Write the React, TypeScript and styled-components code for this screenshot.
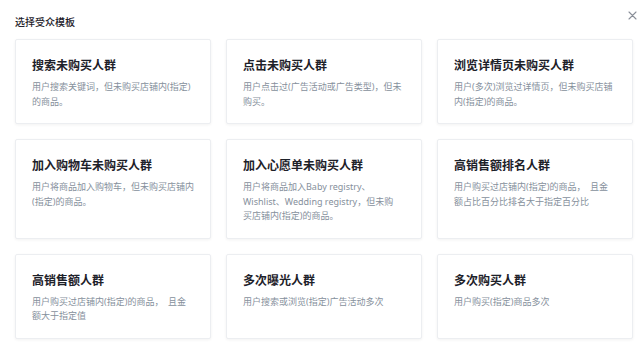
import { Fragment } from "react";
import styled, { createGlobalStyle } from "styled-components";

const GlobalStyle = createGlobalStyle`
  html, body {
    margin: 0;
    padding: 0;
    background: #ffffff;
  }
  body {
    font-family: "Noto Sans CJK SC", "Noto Sans", sans-serif;
    -webkit-font-smoothing: antialiased;
  }
`;

const Wrap = styled.div`
  width: 644px;
  height: 351px;
  box-sizing: border-box;
  padding: 15px 12px 0px 15px;
  position: relative;
  background-color: #ffffff;
  overflow: hidden;
`;
const Header = styled.div`
  display: flex;
  align-items: center;
  height: 14px;
  margin-bottom: 10px;
`;
const Title = styled.h1`
  margin: 0;
  font-size: 10px;
  line-height: 14px;
  font-weight: 500;
  color: #1d2129;
`;
const Close = styled.button`
  position: absolute;
  top: 10px;
  right: 7px;
  width: 10px;
  height: 10px;
  padding: 0;
  border: none;
  background: none;
  cursor: pointer;
  display: flex;
  align-items: center;
  justify-content: center;
  svg {
    display: block;
  }
`;
const Grid = styled.div`
  display: grid;
  grid-template-columns: repeat(3, 196px);
  column-gap: 15px;
  row-gap: 15px;
`;
const Card = styled.div`
  box-sizing: border-box;
  padding: 16px 13px 14px 16px;
  background: #ffffff;
  border: 1px solid #eceef1;
  border-radius: 2px;
  box-shadow: 0 1px 3px rgba(29, 33, 41, 0.06);
  cursor: pointer;
`;
const CardTitle = styled.div`
  font-size: 12px;
  line-height: 18px;
  font-weight: 700;
  color: #1d2129;
  margin-bottom: 6px;
`;
const CardDesc = styled.div`
  font-family: "Noto Sans", "Noto Sans CJK SC", sans-serif;
  font-size: 9px;
  line-height: 14.5px;
  color: #86909c;
  white-space: pre;
`;

// lines broken where the design breaks them
const templates = [
  { title: "搜索未购买人群", desc: ["用户搜索关键词，但未购买店铺内(指定)", "的商品。"] },
  { title: "点击未购买人群", desc: ["用户点击过(广告活动或广告类型)，但未", "购买。"] },
  { title: "浏览详情页未购买人群", desc: ["用户(多次)浏览过详情页，但未购买店铺", "内(指定)的商品。"] },
  { title: "加入购物车未购买人群", desc: ["用户将商品加入购物车，但未购买店铺内", "(指定)的商品。"] },
  {
    title: "加入心愿单未购买人群",
    desc: ["用户将商品加入Baby registry、", "Wishlist、Wedding registry，但未购", "买店铺内(指定)的商品。"],
  },
  { title: "高销售额排名人群", desc: ["用户购买过店铺内(指定)的商品，  且金", "额占比百分比排名大于指定百分比"] },
  { title: "高销售额人群", desc: ["用户购买过店铺内(指定)的商品，  且金", "额大于指定值"] },
  { title: "多次曝光人群", desc: ["用户搜索或浏览(指定)广告活动多次"] },
  { title: "多次购买人群", desc: ["用户购买(指定)商品多次"] },
];

function App() {
  return (
    <Wrap>
      <GlobalStyle />
      <Header>
        <Title>选择受众模板</Title>
      </Header>
      <Close aria-label="close">
        <svg width="9" height="9" viewBox="0 0 9 9">
          <path d="M1 1L8 8M8 1L1 8" stroke="#8a8f99" strokeWidth="1.1" strokeLinecap="round" />
        </svg>
      </Close>
      <Grid>
        {templates.map((t) => (
          <Card key={t.title}>
            <CardTitle>{t.title}</CardTitle>
            <CardDesc>
              {t.desc.map((line, i) => (
                <Fragment key={i}>
                  {i > 0 && <br />}
                  {line}
                </Fragment>
              ))}
            </CardDesc>
          </Card>
        ))}
      </Grid>
    </Wrap>
  );
}

export default App;
